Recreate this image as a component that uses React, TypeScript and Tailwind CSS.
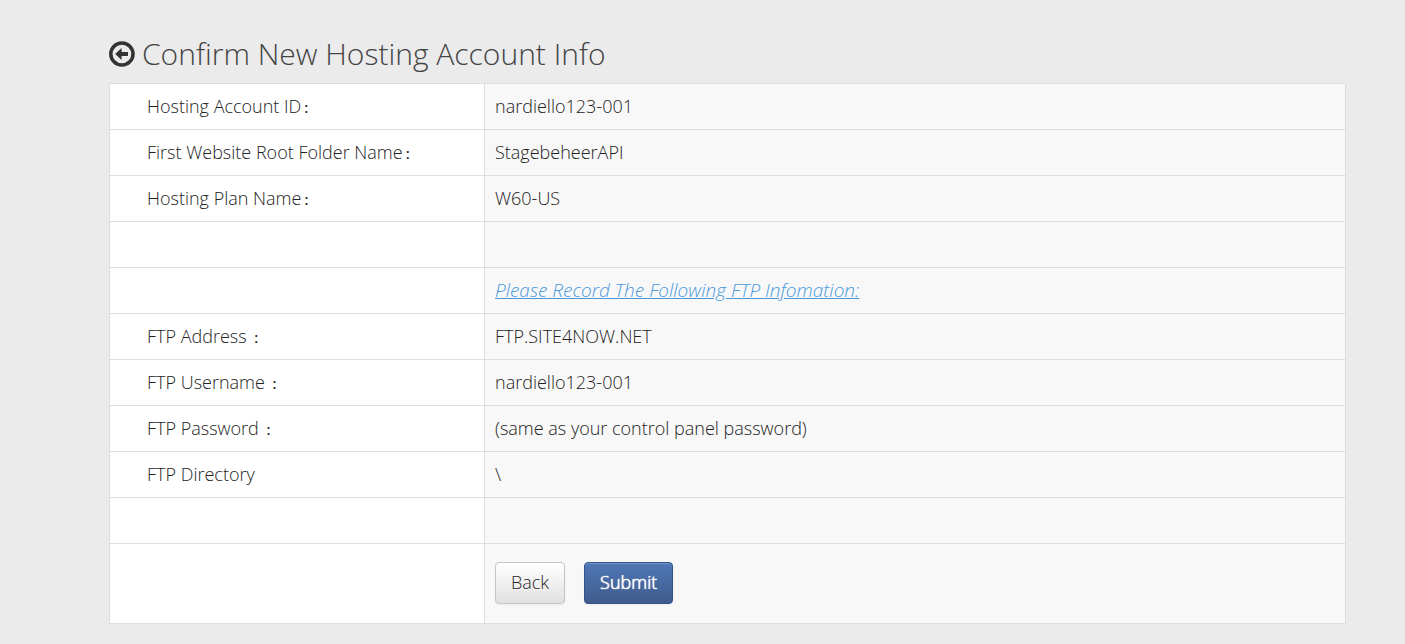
import type { ReactNode } from "react";

type Row = { label: string; colon?: boolean; value: ReactNode };

const rows: Row[] = [
  { label: "Hosting Account ID", colon: true, value: "nardiello123-001" },
  { label: "First Website Root Folder Name", colon: true, value: "StagebeheerAPI" },
  { label: "Hosting Plan Name", colon: true, value: "W60-US" },
  { label: "", value: "" },
  {
    label: "",
    value: <em className="text-[19px] text-[#4a98dc] underline">Please Record The Following FTP Infomation:</em>,
  },
  { label: "FTP Address ", colon: true, value: "FTP.SITE4NOW.NET" },
  { label: "FTP Username ", colon: true, value: "nardiello123-001" },
  { label: "FTP Password ", colon: true, value: "(same as your control panel password)" },
  { label: "FTP Directory", value: "\\" },
  { label: "", value: "" },
];

function BackArrowIcon() {
  return (
    <svg viewBox="0 0 26 26" className="size-[26px]" aria-hidden="true">
      <circle cx="12.9" cy="13" r="11.1" fill="none" stroke="#333" strokeWidth="3.5" />
      <path d="M6.2 13 12.6 7V10.9H19V15.1H12.6V19Z" fill="#333" />
    </svg>
  );
}

export default function App() {
  return (
    <main className="min-h-screen bg-[#ebebeb] pt-8 pr-[59px] pb-5 pl-[109px] font-['Open_Sans','Noto_Sans_CJK_SC',sans-serif] text-lg leading-[25px] font-light text-[#222]">
      <header className="mb-2 flex h-[43px] items-center gap-[7px]">
        <a href="#back" aria-label="Go back">
          <BackArrowIcon />
        </a>
        <h1 className="text-[30px] leading-10 font-light text-[#444]">Confirm New Hosting Account Info</h1>
      </header>
      <table className="w-full table-fixed border-collapse border border-[#ddd] bg-[#f8f8f8]">
        <colgroup>
          <col className="w-[375px]" />
          <col />
        </colgroup>
        <tbody>
          {rows.map((row, index) => (
            <tr key={index} className="h-[46px]">
              <th scope="row" className="border border-[#ddd] bg-white pl-[37px] text-left font-light">
                {row.label}
                {row.colon && <span className="ml-0.5 text-xs leading-3 font-medium">：</span>}
              </th>
              <td className="border border-[#ddd] px-2.5">{row.value}</td>
            </tr>
          ))}
          <tr className="h-20">
            <td className="border border-[#ddd] bg-white" />
            <td className="border border-[#ddd] px-2.5 pb-0.5">
              <div className="flex gap-[19px]">
                <button
                  type="button"
                  className="h-[42px] rounded border border-[#c5c5c5] bg-linear-to-b from-white to-[#e1e1e1] px-[15px] font-light shadow-[0_1px_2px_rgba(0,0,0,0.05)] text-shadow-[0_1px_1px_rgba(255,255,255,0.75)]"
                >
                  Back
                </button>
                <button
                  type="submit"
                  className="h-[42px] rounded border border-[#34538b] bg-linear-to-b from-[#4f78b7] to-[#3f5b8c] px-[15px] font-light text-white shadow-[inset_0_1px_0_rgba(255,255,255,0.2),0_1px_2px_rgba(0,0,0,0.05)] text-shadow-[0_0_1px_#fff,0_0_1px_#fff]"
                >
                  Submit
                </button>
              </div>
            </td>
          </tr>
        </tbody>
      </table>
    </main>
  );
}
